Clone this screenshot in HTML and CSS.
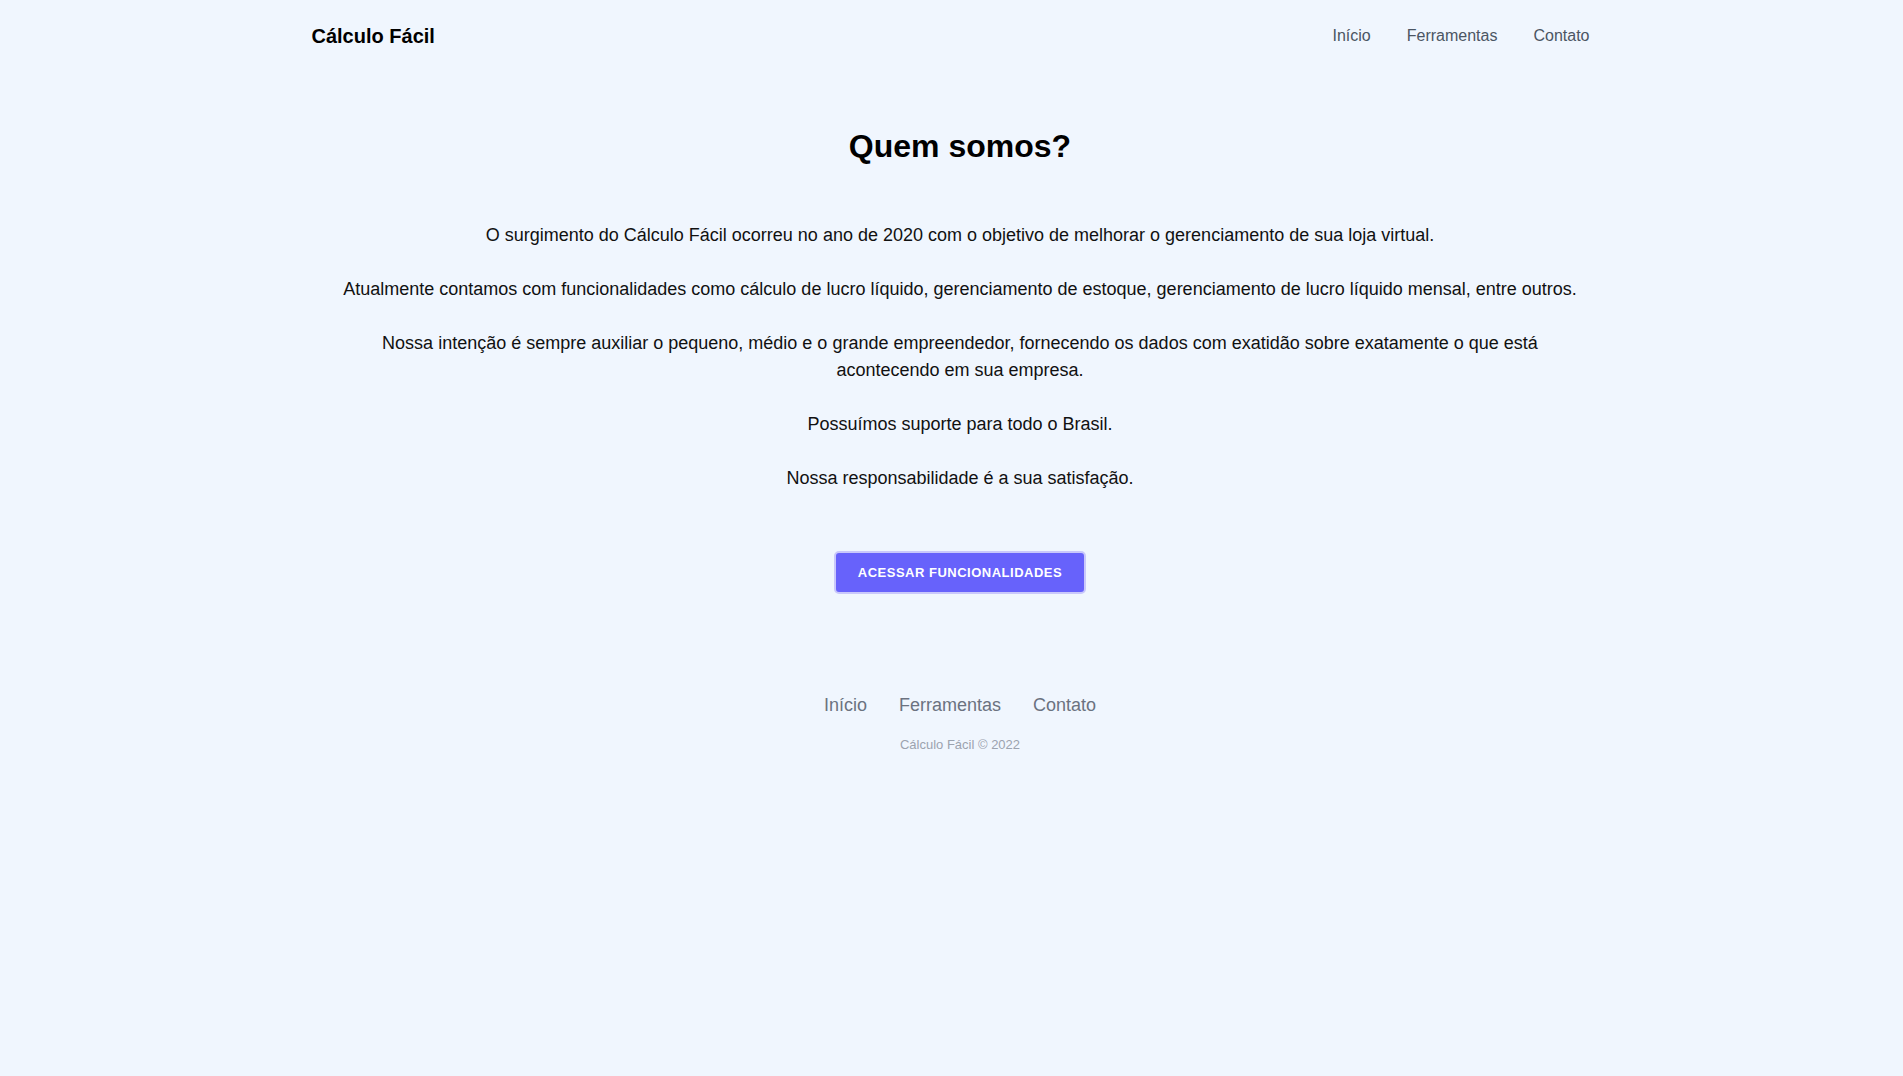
FILE: index.html
```html
<!DOCTYPE html>
<html lang="pt-BR">
<head>
<meta charset="utf-8">
<title>Cálculo Fácil</title>
<link rel="stylesheet" href="styles.css">
</head>
<body>
<header class="header">
  <div class="logo">Cálculo Fácil</div>
  <nav class="nav">
    <a href="#">Início</a>
    <a href="#">Ferramentas</a>
    <a href="#">Contato</a>
  </nav>
</header>
<main class="main">
  <h1 class="title">Quem somos?</h1>
  <div class="text">
    <p>O surgimento do Cálculo Fácil ocorreu no ano de 2020 com o objetivo de melhorar o gerenciamento de sua loja virtual.</p>
    <p>Atualmente contamos com funcionalidades como cálculo de lucro líquido, gerenciamento de estoque, gerenciamento de lucro líquido mensal, entre outros.</p>
    <p>Nossa intenção é sempre auxiliar o pequeno, médio e o grande empreendedor, fornecendo os dados com exatidão sobre exatamente o que está acontecendo em sua empresa.</p>
    <p>Possuímos suporte para todo o Brasil.</p>
    <p>Nossa responsabilidade é a sua satisfação.</p>
  </div>
  <a class="btn" href="#">ACESSAR FUNCIONALIDADES</a>
</main>
<footer class="footer">
  <nav class="footer-nav">
    <a href="#">Início</a>
    <a href="#">Ferramentas</a>
    <a href="#">Contato</a>
  </nav>
  <p class="copy">Cálculo Fácil © 2022</p>
</footer>
</body>
</html>
```
FILE: styles.css
```css
* { box-sizing: border-box; }
html, body { margin: 0; padding: 0; }
body {
  background: #f0f6fe;
  font-family: "Liberation Sans", Arial, sans-serif;
  color: #111;
}
a { text-decoration: none; }
.header {
  width: 1280px;
  margin: 0 auto;
  height: 72px;
  padding-top: 0;
  display: flex;
  align-items: center;
  justify-content: space-between;
}
.logo {
  font-size: 20px;
  font-weight: bold;
  color: #000;
}
.nav { display: flex; gap: 36px; padding-right: 2px; }
.nav a {
  font-size: 16px;
  color: #4b5563;
}
.main {
  display: flex;
  flex-direction: column;
  align-items: center;
  padding-top: 54px;
  padding-left: 17px;
}
.title {
  margin: 0;
  font-size: 32px;
  line-height: 40px;
  font-weight: bold;
  color: #000;
}
.text {
  max-width: 1248px;
  margin-top: 56px;
  text-align: center;
}
.text p {
  margin: 0 0 27px;
  font-size: 18px;
  line-height: 27px;
  color: #111;
}
.text p:last-child { margin-bottom: 0; }
.btn {
  margin-top: 59px;
  display: inline-block;
  width: 252px;
  height: 43px;
  line-height: 39px;
  text-align: center;
  background: #6762fb;
  color: #fff;
  font-size: 13px;
  font-weight: bold;
  letter-spacing: 0.5px;
  border: 2px solid #c9c8fb;
  border-radius: 5px;
}
.footer {
  margin-top: 99px;
  padding-left: 17px;
  display: flex;
  flex-direction: column;
  align-items: center;
}
.footer-nav { display: flex; gap: 32px; }
.footer-nav a {
  font-size: 18px;
  line-height: 24px;
  color: #6b7280;
}
.copy {
  margin: 20px 0 0;
  font-size: 13px;
  line-height: 16px;
  color: #9ca3af;
}
```
